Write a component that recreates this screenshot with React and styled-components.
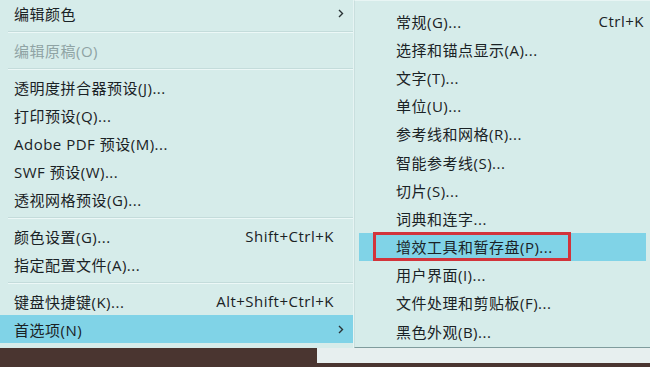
import React from "react";
import styled, { createGlobalStyle } from "styled-components";

const Global = createGlobalStyle`
  html, body { margin: 0; padding: 0; background: #4a3530; }
  #root { width: 650px; height: 367px; overflow: hidden; }
`;

const Page = styled.div`
  width: 650px;
  height: 367px;
  display: flex;
  flex-direction: column;
  font-family: "Open Sans", "Noto Sans CJK SC", sans-serif;
  font-size: 15px;
  letter-spacing: 0.5px;
  color: #1a2225;
`;

const Menus = styled.div`
  display: flex;
  height: 348px;
`;

const MainMenu = styled.div`
  width: 354px;
  background: #d6ecea;
  display: flex;
  flex-direction: column;
  padding: 0 0 4px 0;
  box-sizing: border-box;
  border-right: 1px solid #e6f4f3;
`;

const SubMenu = styled.div`
  flex: 1;
  background: #d6ecea;
  display: flex;
  flex-direction: column;
  padding: 6px 4px 3px 4px;
  box-sizing: border-box;
  border-left: 1px solid #c9dfde;
  border-top: 1px solid #e8f5f4;
  border-bottom: 1px solid #7f9c9d;
`;

const Row = styled.div`
  display: flex;
  align-items: center;
  height: ${(p) => p.$h || 28}px;
  flex-shrink: 0;
  padding: 0 9px 0 ${(p) => p.$indent}px;
  background: ${(p) => (p.$active ? "#80d3e7" : "transparent")};
  color: ${(p) => (p.$disabled ? "#8fa3a4" : "#1a2225")};
  white-space: nowrap;
`;

const Label = styled.span`
  flex: 1;
`;

const Boxed = styled.span`
  display: inline-flex;
  align-items: center;
  height: 29px;
  box-sizing: border-box;
  border: 3px solid #d2343b;
  padding: 0 15px 0 20px;
  margin-left: -23px;
`;

const Shortcut = styled.span`
  margin-right: ${(p) => p.$mr || 0}px;
`;

const Arrow = styled.svg`
  width: 6px;
  height: 9px;
`;

const Separator = styled.div`
  height: 9px;
  flex-shrink: 0;
  display: flex;
  flex-direction: column;
  justify-content: center;
  padding-left: 8px;
  &::before {
    content: "";
    display: block;
    height: 1px;
    background: #c4dcdb;
  }
  &::after {
    content: "";
    display: block;
    height: 1px;
    background: #ecf8f7;
  }
`;

const Bottom = styled.div`
  flex: 1;
  display: flex;
`;

const DarkPart = styled.div`
  width: 317px;
  background: #4a3530;
`;

const LightPart = styled.div`
  flex: 1;
  background: #e7efef;
  border-bottom: 4px solid #4a3530;
`;

const Chevron = () => (
  <Arrow viewBox="0 0 6 9">
    <path d="M1 1 L4.5 4.5 L1 8" fill="none" stroke="#2a3336" strokeWidth="1.4" />
  </Arrow>
);

const left = [
  { t: "编辑颜色", arrow: true, h: 27 },
  { sep: true },
  { t: "编辑原稿(O)", disabled: true },
  { sep: true },
  { t: "透明度拼合器预设(J)..." },
  { t: "打印预设(Q)..." },
  { t: "Adobe PDF 预设(M)..." },
  { t: "SWF 预设(W)..." },
  { t: "透视网格预设(G)..." },
  { sep: true },
  { t: "颜色设置(G)...", k: "Shift+Ctrl+K" },
  { t: "指定配置文件(A)..." },
  { sep: true },
  { t: "键盘快捷键(K)...", k: "Alt+Shift+Ctrl+K" },
  { t: "首选项(N)", arrow: true, active: true },
];

const right = [
  { t: "常规(G)...", k: "Ctrl+K" },
  { t: "选择和锚点显示(A)..." },
  { t: "文字(T)..." },
  { t: "单位(U)..." },
  { t: "参考线和网格(R)..." },
  { t: "智能参考线(S)..." },
  { t: "切片(S)..." },
  { t: "词典和连字..." },
  { t: "增效工具和暂存盘(P)...", active: true, boxed: true },
  { t: "用户界面(I)..." },
  { t: "文件处理和剪贴板(F)..." },
  { t: "黑色外观(B)..." },
];

export default function App() {
  return (
    <Page>
      <Global />
      <Menus>
        <MainMenu>
          {left.map((it, i) =>
            it.sep ? (
              <Separator key={i} />
            ) : (
              <Row key={i} $indent={14} $h={it.h} $active={it.active} $disabled={it.disabled}>
                <Label>{it.t}</Label>
                {it.k && <Shortcut $mr={10}>{it.k}</Shortcut>}
                {it.arrow && <Chevron />}
              </Row>
            )
          )}
        </MainMenu>
        <SubMenu>
          {right.map((it, i) => (
            <Row key={i} $indent={37} $h={28.2} $active={it.active}>
              <Label>{it.boxed ? <Boxed>{it.t}</Boxed> : it.t}</Label>
              {it.k && <Shortcut $mr={-7}>{it.k}</Shortcut>}
            </Row>
          ))}
        </SubMenu>
      </Menus>
      <Bottom>
        <DarkPart />
        <LightPart />
      </Bottom>
    </Page>
  );
}
